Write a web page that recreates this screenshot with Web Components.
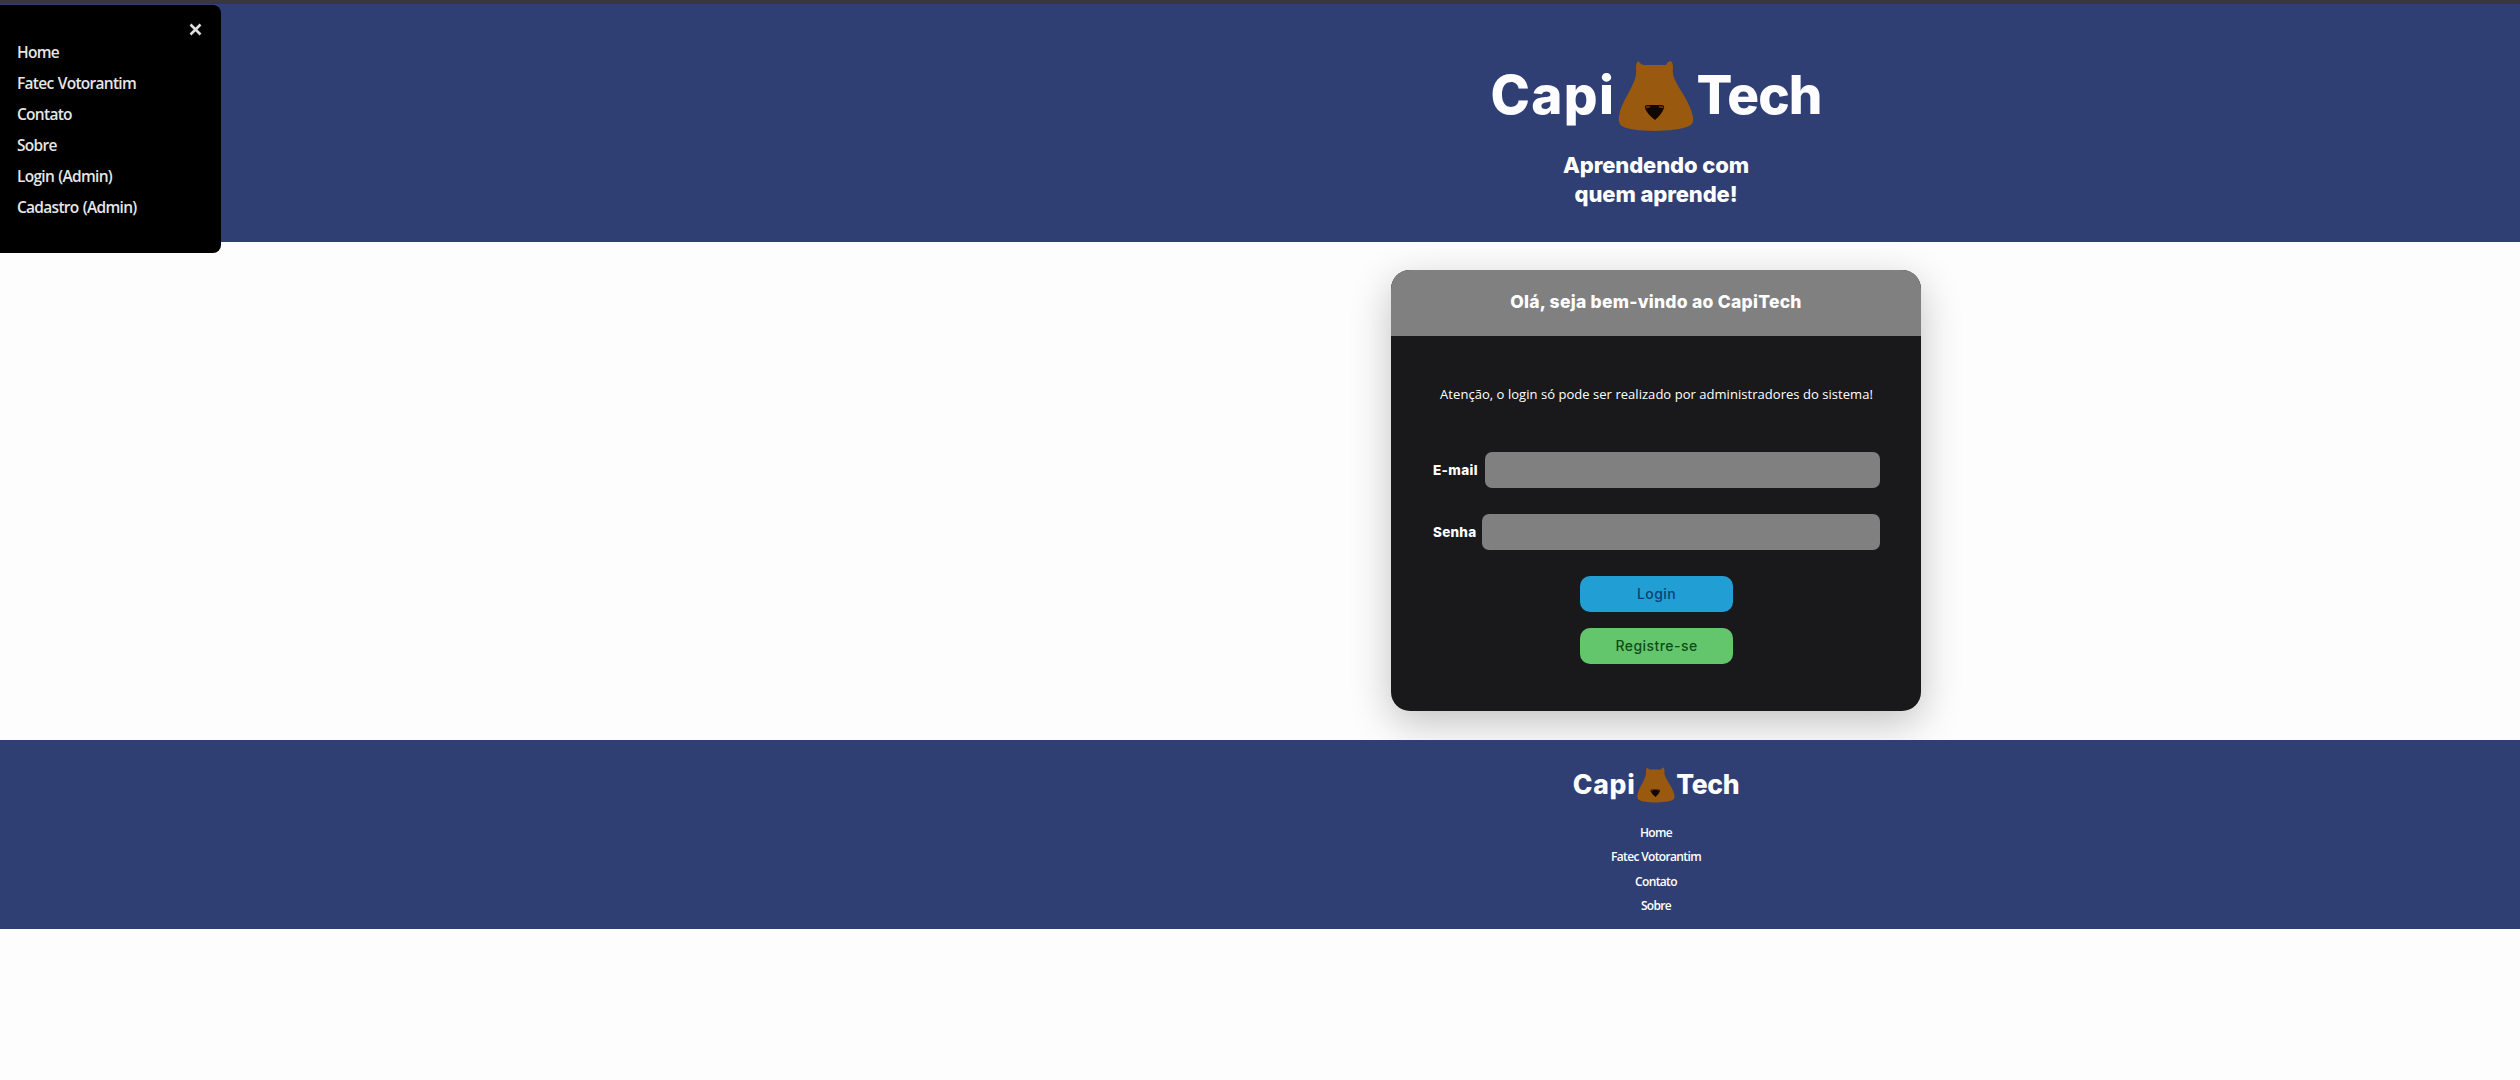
<!DOCTYPE html>
<html lang="pt-br">
<head>
<meta charset="utf-8">
<title>CapiTech</title>
<style>
html,body{margin:0;height:100%}
body{background:#fdfdfd;font-family:"Open Sans","Noto Sans",sans-serif;color:#fff;overflow:hidden}
</style>
</head>
<body>
<capi-app></capi-app>
<script>
const define = (name, html) => customElements.define(name, class extends HTMLElement {
  constructor() {
    super();
    const t = document.createElement('template');
    t.innerHTML = html;
    this.attachShadow({mode: 'open'}).append(t.content.cloneNode(true));
  }
});

define('capi-face', `
<style>:host{display:block;width:76px;height:72px;flex:none}svg{display:block;width:100%;height:100%}</style>
<svg viewBox="0 0 76 72" preserveAspectRatio="none">
<path d="M20 1 Q22 4 26 5 L48 5 Q50 1 53 1 Q55 3 55 8 Q54 14 57 20 C62 31 72 42 75 57 Q76 64 71 66 C60 72 15 73 4 66 Q0 64 1 56 C3 44 9 37 14 26 Q19 17 18 8 Q18 3 20 1Z" fill="#99590f"/>
<path d="M27 48 Q26 45 30 45 L43 45 Q47 45 46 48 Q44 54 37 60 Q29 54 27 48Z" fill="#120600"/>
<path d="M28 48 q1 -2 4 -1 M45 48 q-1 -2 -4 -1" stroke="#6b2c08" stroke-width="2" fill="none"/>
</svg>`);

define('capi-logo', `
<style>
:host{display:flex;justify-content:center;font:800 53px/64px Inter,sans-serif;color:#fdfdff}
span{white-space:pre;padding-top:var(--tp,3px)}
.a{letter-spacing:var(--la,1.4px)}.b{letter-spacing:var(--lb,-.9px)}
capi-face{width:var(--fw,76px);height:var(--fh,72px);margin:var(--fm,0 2px 0 3px)}
</style>
<span class="a">Capi</span><capi-face></capi-face><span class="b">Tech</span>`);

define('side-menu', `
<style>
:host{display:block;box-sizing:border-box;width:221px;height:248px;background:#000;border-radius:0 8px 8px 0;padding:12px 17px;color:#e6e6e6}
.x{display:flex;justify-content:flex-end;height:20px}
svg{width:13px;height:13px;margin:6px 2px 0 0}
nav{display:flex;flex-direction:column;font-weight:600;font-size:15.5px;line-height:31.1px;letter-spacing:-.72px;word-spacing:1px}
</style>
<div class="x"><svg viewBox="0 0 13 13"><path d="M1.5 1.5l10 10M11.5 1.5l-10 10" stroke="#ddd" stroke-width="2.6"/></svg></div>
<nav><slot></slot></nav>`);

define('menu-item', `<style>:host{display:block;white-space:nowrap}</style><slot></slot>`);

define('site-header', `
<style>
:host{display:block;box-sizing:border-box;height:238px;background:#2f3f74;padding:56px 0 0 792px}
p{margin:27px 0 0;text-align:center;font:800 22px/28.5px Inter,sans-serif;letter-spacing:-.1px}
capi-logo{height:64px}
</style>
<capi-logo></capi-logo><p>Aprendendo com<br>quem aprende!</p>`);

define('form-field', `
<style>
:host{display:flex;align-items:center;height:36px;gap:6px;font:800 13.5px/20px Inter,sans-serif}
input{flex:1;min-width:0;height:36px;box-sizing:border-box;border:0;border-radius:7px;background:#808080;margin:0}
label{white-space:nowrap;width:var(--lw);letter-spacing:var(--ls,0)}
</style>
<label><slot></slot></label><input>`);

define('pill-button', `
<style>
:host{display:block;width:153px;height:36px}
button{width:100%;height:100%;border:0;border-radius:10px;background:var(--bg);color:var(--fg);font:500 14px/20px Inter,sans-serif;letter-spacing:.45px;padding:0}
</style><button><slot></slot></button>`);

define('login-card', `
<style>
:host{display:flex;flex-direction:column;width:530px;height:441px;border-radius:19px;overflow:hidden;background:#19191b;box-shadow:0 12px 40px rgba(0,0,0,.24)}
h1{margin:0;height:66px;background:#808080;text-align:center;font:800 17.5px/63px Inter,sans-serif;letter-spacing:.26px}
.body{padding:47px 41px 0 42px;display:flex;flex-direction:column;align-items:center}
p{margin:0 0 47px;font-size:13px;line-height:22px;white-space:nowrap;letter-spacing:.04px}
form-field{align-self:stretch;margin-bottom:26px}
pill-button{margin-bottom:16px}
</style>
<h1>Olá, seja bem-vindo ao CapiTech</h1>
<div class="body">
<p>Atenção, o login só pode ser realizado por administradores do sistema!</p>
<form-field style="--lw:46px;--ls:.35px">E-mail</form-field>
<form-field style="--lw:43px;--ls:.25px">Senha</form-field>
<pill-button style="--bg:#219fd4;--fg:#0b4173">Login</pill-button>
<pill-button style="--bg:#63c66d;--fg:#104c17">Registre-se</pill-button>
</div>`);

define('site-footer', `
<style>
:host{display:block;box-sizing:border-box;height:189px;background:#2f3f74;padding:27px 0 0 792px;position:relative}
capi-logo{font-size:26.5px;line-height:34px;height:36px;--fw:38px;--fh:36px;--fm:0 1px 0 2px;--la:.7px;--lb:-.4px;--tp:0}
nav{margin-top:18px;text-align:center;font-size:12px;font-weight:600;line-height:24.3px;letter-spacing:-.65px}
</style>
<capi-logo></capi-logo>
<nav><slot></slot></nav>`);

define('capi-app', `
<style>
:host{display:block}
.strip{height:4px;background:#38383c}
main{display:flex;justify-content:center;box-sizing:border-box;height:498px;padding:28px 0 0 792px}
side-menu{position:absolute;left:0;top:5px}
</style>
<div class="strip"></div>
<site-header></site-header>
<main><login-card></login-card></main>
<site-footer><menu-item>Home</menu-item><menu-item>Fatec Votorantim</menu-item><menu-item>Contato</menu-item><menu-item>Sobre</menu-item></site-footer>
<side-menu><menu-item>Home</menu-item><menu-item>Fatec Votorantim</menu-item><menu-item>Contato</menu-item><menu-item>Sobre</menu-item><menu-item>Login (Admin)</menu-item><menu-item>Cadastro (Admin)</menu-item></side-menu>`);
</script>
</body>
</html>
